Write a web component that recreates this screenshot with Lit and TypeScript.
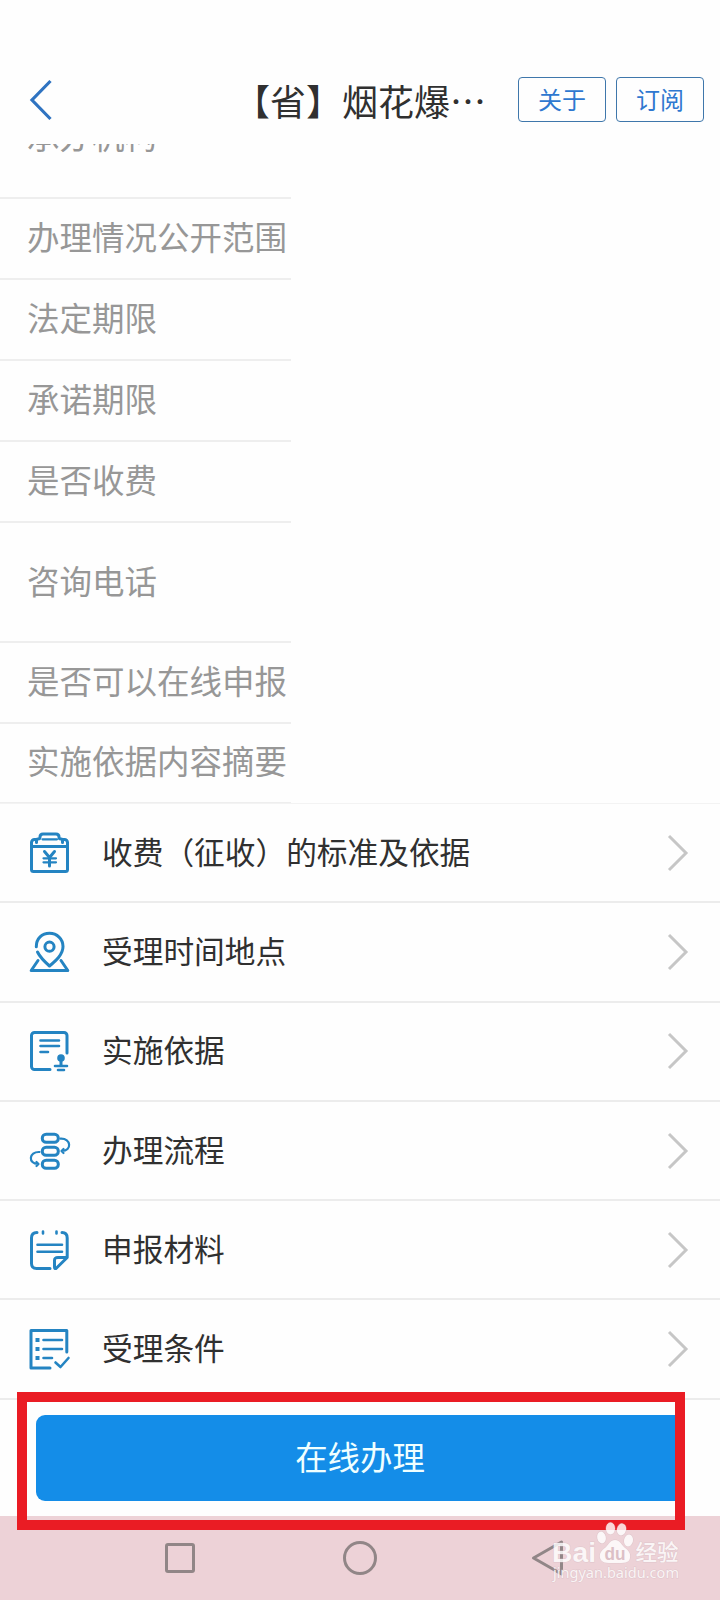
import { LitElement, html, css, svg } from "lit";
import { customElement } from "lit/decorators.js";

const details = [
  { label: "承办机构", size: "cut" },
  { label: "办理情况公开范围", size: "" },
  { label: "法定期限", size: "" },
  { label: "承诺期限", size: "" },
  { label: "是否收费", size: "" },
  { label: "咨询电话", size: "tall" },
  { label: "是否可以在线申报", size: "short" },
  { label: "实施依据内容摘要", size: "short" },
];

const feeIcon = svg`
  <path d="M6 6.500H4.500a3 3 0 0 0-3 3V36.500a2 2 0 0 0 2 2H35.500a2 2 0 0 0 2-2V9.500a3 3 0 0 0-3-3H33M1.500 13.500H37.500"/>
  <path d="M6.500 9.500V7.500a1.500 1.500 0 0 1 1.500-1.500Q10 6 10 4Q10 1 13 1H26Q29 1 29 4Q29 6 31 6a1.500 1.500 0 0 1 1.500 1.500V9.500"/>
  <path class="thin" d="M12.500 6.300H27"/>
  <path d="M14.500 18.500L19.500 24.500L24.500 18.500M19.500 25V33"/><path class="thin" d="M13.500 25.300H26M13.500 29.300H26"/>`;
const placeIcon = svg`
  <path d="M6.300 14.700C6.300 6.500 12 1.300 19.500 1.300C27 1.300 33 7 33 14.500C33 22.500 26 28.500 19.500 34C15.500 30.500 10.500 26 7.500 20"/>
  <circle cx="19.500" cy="14.700" r="4.600"/>
  <path d="M8 28.500L1.200 38.500H37.800L31 28.500"/>`;
const basisIcon = svg`
  <path d="M37 22V4.500a3 3 0 0 0-3-3H4.500a3 3 0 0 0-3 3V35.500a3 3 0 0 0 3 3H20"/>
  <path class="medium" d="M10.500 9.500H29M10.500 15H29M10.500 21H18M25 35H37M28 39H34"/>
  <circle cx="31" cy="27" r="3.800" class="fill"/><path d="M31 27V34"/>`;
const flowIcon = svg`
  <rect x="12.300" y="3.300" width="16" height="8" rx="3.800"/>
  <rect x="12.300" y="16.200" width="16" height="8" rx="3.800"/>
  <rect x="12.300" y="29.200" width="16" height="8" rx="3.800"/>
  <path class="thin" d="M30.500 7.600C41.500 7 42 20 32 20M33.500 18L31.500 20L33.500 22M9.500 21C-1.500 20.500 -2 33 8 33M6.500 31L8.500 33L6.500 35"/>`;
const fileIcon = svg`
  <path d="M7 2.500C3.500 2.500 1.500 4 1.500 8V33.500C1.500 37 3 38.500 6.500 38.500H20M32 2.500C35.500 2.500 37.200 4.500 37.200 8V27.500L26 38.500Q24.500 39 24.500 37V30.500C24.500 28 25.500 27.500 28 27.500H36.500"/>
  <path class="medium" d="M13 1.500V3.500M26.500 1.500V3.500M7.500 14.700H32M7.500 21.700H32"/>`;
const termsIcon = svg`
  <path d="M36.800 23V1.500H1V39H20"/>
  <path class="medium" d="M13.500 11H32M13.500 20H32M13.500 29H22M25.500 33.500L30.500 38L38.500 29"/>
  <path class="dots" d="M5.500 11H9.500M5.500 20H9.500M5.500 29H9.500"/>`;

const sections = [
  { label: "收费（征收）的标准及依据", icon: feeIcon },
  { label: "受理时间地点", icon: placeIcon },
  { label: "实施依据", icon: basisIcon },
  { label: "办理流程", icon: flowIcon },
  { label: "申报材料", icon: fileIcon },
  { label: "受理条件", icon: termsIcon },
];

@customElement("app-root")
export class AppRoot extends LitElement {
  static styles = css`
    :host {
      display: flex;
      flex-direction: column;
      position: relative;
      box-sizing: border-box;
      width: 720px;
      height: 1600px;
      overflow: hidden;
      background: #fefefe;
      color: #303030;
      font-family: "Noto Sans CJK SC", sans-serif;
    }
    svg { display: block; fill: none; flex: none; }
    .header {
      display: flex;
      align-items: center;
      flex: none;
      box-sizing: border-box;
      height: 144px;
      padding: 56px 16px 0 29px;
    }
    .title {
      margin: 0 0 1px 181px;
      width: 284px;
      font-size: 36px;
      line-height: 50px;
      font-weight: 400;
      white-space: nowrap;
    }
    .actions { display: flex; gap: 10px; margin-bottom: 2px; }
    .action {
      box-sizing: border-box;
      width: 88px;
      height: 45px;
      padding: 0;
      border: 1px solid #3f77ab;
      border-radius: 4px;
      background: #fefefe;
      color: #2f78d0;
      font: 24px/42px "Noto Sans CJK SC", sans-serif;
    }
    .details { flex: none; width: 291px; overflow: hidden; }
    .detail {
      display: flex;
      align-items: center;
      box-sizing: border-box;
      height: 81px;
      padding: 0 0 5px 27px;
      border-bottom: 2px solid #eeeeee;
      color: #979797;
      font-size: 32.5px;
      line-height: 46px;
      white-space: nowrap;
    }
    .cut { height: 55px; align-items: flex-start; padding-bottom: 0; }
    .cut span { margin-top: -32px; }
    .tall { height: 120px; }
    .short { height: 80.5px; }
    .sections { flex: none; }
    .section {
      display: flex;
      align-items: center;
      box-sizing: border-box;
      height: 99.300px;
      padding: 0 31px 0 29.500px;
      border-bottom: 2px solid #ececec;
    }
    .first { box-shadow: 0 -1px #f3f3f3; }
    .icon { width: 40px; height: 40px; overflow: visible; stroke: #2484c2; stroke-width: 3; stroke-linecap: round; stroke-linejoin: round; }
    .medium { stroke-width: 2.600; }
    .thin { stroke-width: 2.200; }
    .fill { fill: #2484c2; stroke: none; }
    .dots { stroke-width: 4; stroke-linecap: butt; }
    .name { flex: 1; margin: 0 0 4px 32.500px; font-size: 30.700px; line-height: 44px; }
    .submit {
      flex: none;
      margin: 15px 36px 0;
      height: 86px;
      padding: 0 0 4px;
      border: 0;
      border-radius: 9px;
      background: #148de8;
      color: #f0ffff;
      font: 32.400px/80px "Noto Sans CJK SC", sans-serif;
    }
    .nav {
      display: flex;
      align-items: center;
      box-sizing: border-box;
      margin-top: auto;
      height: 84px;
      padding-left: 165px;
      gap: 148px;
      background: #edd2d7;
    }
    .navicon { stroke: #918687; stroke-width: 3; }
    .frame {
      position: absolute;
      left: 17px;
      top: 1392px;
      box-sizing: border-box;
      width: 668px;
      height: 138px;
      border: 10px solid #ea1c24;
    }
    .mark { position: absolute; left: 550px; top: 1519px; overflow: visible; }
    .ink { fill: #fff; fill-opacity: 0.82; stroke: #d3b9bf; stroke-opacity: 0.5; stroke-width: 1; paint-order: stroke; }
    .brand { font: 700 28px "Liberation Sans", sans-serif; }
    .du { font: 700 19px "Liberation Sans", sans-serif; fill: #dcbfc6; }
    .cn { font: 500 21.500px "Noto Sans CJK SC", sans-serif; }
    .url { font: 13.500px "Noto Sans", sans-serif; }
  `;

  render() {
    return html`
      <header class="header">
        <svg width="24" height="42" viewBox="0 0 24 42" stroke="#2f73c1" stroke-width="3.200">
          <path d="M21.500 2L3 21L21.500 40" />
        </svg>
        <div class="title">【省】烟花爆…</div>
        <div class="actions">
          <button class="action">关于</button>
          <button class="action">订阅</button>
        </div>
      </header>
      <div class="details">
        ${details.map((d) => html`<div class="detail ${d.size}"><span>${d.label}</span></div>`)}
      </div>
      <div class="sections">
        ${sections.map(
          (s, i) => html`<div class="section ${i === 0 ? "first" : ""}">
            <svg class="icon" viewBox="0 0 40 40">${s.icon}</svg>
            <div class="name">${s.label}</div>
            <svg width="22" height="38" viewBox="0 0 22 38" stroke="#c6c6c6" stroke-width="3">
              <path d="M2 2L19 19L2 36" />
            </svg>
          </div>`
        )}
      </div>
      <button class="submit">在线办理</button>
      <nav class="nav">
        <svg class="navicon" width="30" height="30"><rect x="1.500" y="1.500" width="27" height="27" rx="1.500" /></svg>
        <svg class="navicon" width="34" height="34"><circle cx="17" cy="17" r="15.500" /></svg>
        <svg class="navicon" width="38" height="38"><path d="M36.500 3V35L8.500 19Z" stroke-linejoin="round" /></svg>
      </nav>
      <div class="frame"></div>
      <svg class="mark" width="140" height="65">
        <text class="ink brand" x="2" y="42.500" textLength="44" lengthAdjust="spacingAndGlyphs">Bai</text>
        <g class="ink">
          <ellipse cx="51.500" cy="18.500" rx="4.300" ry="6" transform="rotate(-12 51.500 18.500)" />
          <ellipse cx="60.500" cy="9.500" rx="4.500" ry="6" />
          <ellipse cx="71.500" cy="10.500" rx="4.500" ry="6" transform="rotate(12 71.500 10.500)" />
          <ellipse cx="78.500" cy="21.500" rx="4.500" ry="6" transform="rotate(10 78.500 21.500)" />
          <path d="M65 21C70 21 71 25 74 28C78 31 81 34 80 39C79 44 75 44 65 44C55 44 52 44 50 39C49 34 52 31 56 28C59 25 60 21 65 21Z" />
        </g>
        <text class="du" x="54.500" y="41" textLength="21" lengthAdjust="spacingAndGlyphs">du</text>
        <text class="ink cn" x="85.500" y="41">经验</text>
        <text class="ink url" x="3" y="59" textLength="126" lengthAdjust="spacingAndGlyphs">jingyan.baidu.com</text>
      </svg>
    `;
  }
}
